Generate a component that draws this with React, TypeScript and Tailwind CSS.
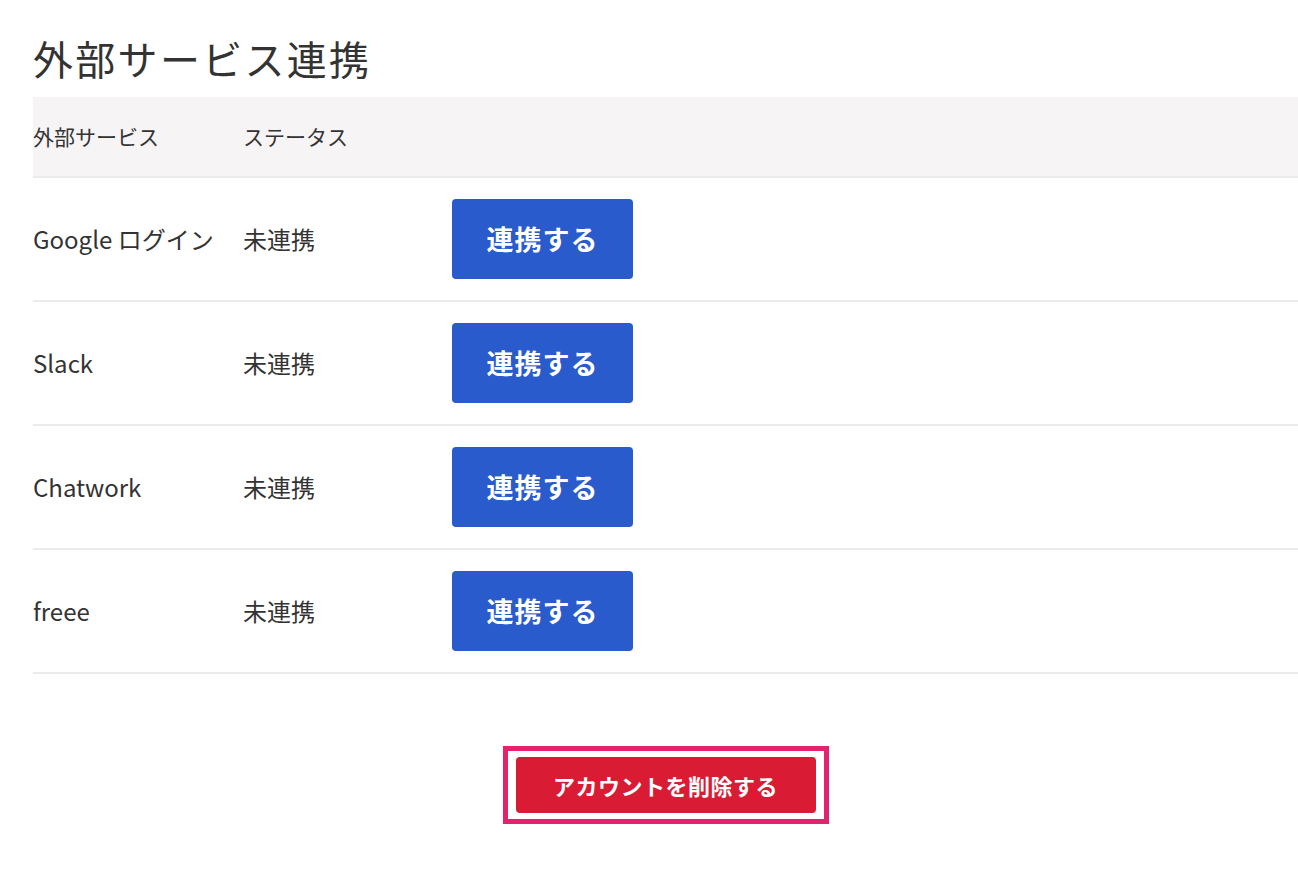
const services = ['Google ログイン', 'Slack', 'Chatwork', 'freee'];

export default function App() {
  return (
    <div
      className="min-h-screen bg-white pl-[33px] pt-[28px] text-[#333333]"
      style={{ fontFamily: '"Noto Sans CJK JP", "Noto Sans", sans-serif' }}
    >
      <h1 className="text-[40px] leading-[60px] tracking-[2.3px] font-normal">外部サービス連携</h1>

      <div className="mt-[9px]">
        {/* Header */}
        <div className="flex h-[81px] items-center border-b-2 border-[#ebebeb] bg-[#f6f4f5] text-[21px]">
          <div className="w-[210px]">外部サービス</div>
          <div className="w-[209px]">ステータス</div>
        </div>

        {/* Rows */}
        {services.map((name) => (
          <div key={name} className="flex h-[124px] items-center border-b-2 border-[#ebebeb] text-[24px]">
            <div className="w-[210px] whitespace-nowrap">{name}</div>
            <div className="w-[209px]">未連携</div>
            <button className="flex h-[80px] w-[181px] items-center justify-center rounded-[4px] bg-[#2a5bcc] text-[27px] font-bold tracking-[1px] text-white">
              連携する
            </button>
          </div>
        ))}
      </div>

      <div className="mt-[72px] flex justify-center">
        <div className="border-[5px] border-[#e2246e] px-[8px] py-[6px]">
          <button className="flex h-[56px] w-[300px] items-center justify-center rounded-[4px] bg-[#d91c34] text-[22px] font-bold tracking-[0.5px] text-white">
            アカウントを削除する
          </button>
        </div>
      </div>
    </div>
  );
}
